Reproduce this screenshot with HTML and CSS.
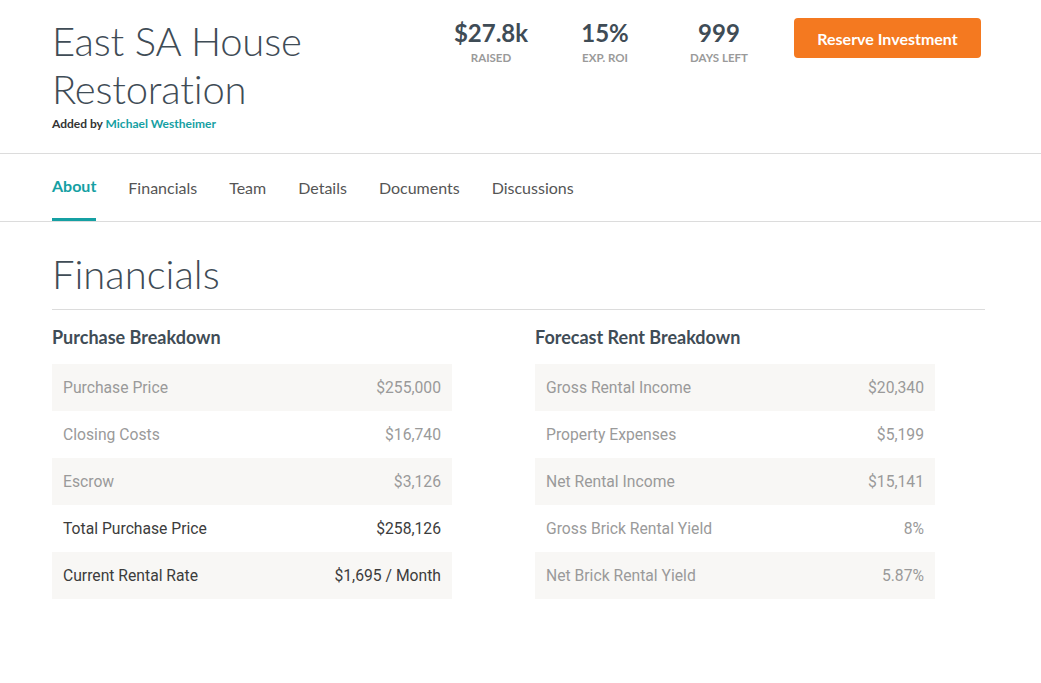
FILE: index.html
```html
<!DOCTYPE html>
<html lang="en">
<head>
<meta charset="utf-8">
<title>East SA House Restoration</title>
<link rel="stylesheet" href="styles.css">
</head>
<body>
<header class="top">
  <div class="wrap top-inner">
    <div class="title-block">
      <h1 class="title">East SA House<br>Restoration</h1>
      <p class="added">Added by <a class="author" href="#">Michael Westheimer</a></p>
    </div>
    <div class="top-right">
      <div class="stats">
        <div class="stat"><div class="stat-num">$27.8k</div><div class="stat-label">RAISED</div></div>
        <div class="stat"><div class="stat-num">15%</div><div class="stat-label">EXP. ROI</div></div>
        <div class="stat"><div class="stat-num">999</div><div class="stat-label">DAYS LEFT</div></div>
      </div>
      <a class="btn" href="#">Reserve Investment</a>
    </div>
  </div>
</header>
<nav class="tabs">
  <div class="wrap tabs-inner">
    <a class="tab active" href="#">About</a>
    <a class="tab" href="#">Financials</a>
    <a class="tab" href="#">Team</a>
    <a class="tab" href="#">Details</a>
    <a class="tab" href="#">Documents</a>
    <a class="tab" href="#">Discussions</a>
  </div>
</nav>
<main class="wrap">
  <h2 class="section-title">Financials</h2>
  <div class="cols">
    <section>
      <h3 class="sub">Purchase Breakdown</h3>
      <table class="fin">
        <tr><td>Purchase Price</td><td>$255,000</td></tr>
        <tr><td>Closing Costs</td><td>$16,740</td></tr>
        <tr><td>Escrow</td><td>$3,126</td></tr>
        <tr class="dark"><td>Total Purchase Price</td><td>$258,126</td></tr>
        <tr class="dark"><td>Current Rental Rate</td><td>$1,695 / Month</td></tr>
      </table>
    </section>
    <section>
      <h3 class="sub">Forecast Rent Breakdown</h3>
      <table class="fin">
        <tr><td>Gross Rental Income</td><td>$20,340</td></tr>
        <tr><td>Property Expenses</td><td>$5,199</td></tr>
        <tr><td>Net Rental Income</td><td>$15,141</td></tr>
        <tr><td>Gross Brick Rental Yield</td><td>8%</td></tr>
        <tr><td>Net Brick Rental Yield</td><td>5.87%</td></tr>
      </table>
    </section>
  </div>
</main>
</body>
</html>
```
FILE: styles.css
```css
* { box-sizing: border-box; }
html, body { margin: 0; padding: 0; background: #fff; }
body { font-family: Lato, "Open Sans", Arial, sans-serif; color: #3f4c56; }
a { text-decoration: none; }

.wrap { width: 933px; margin-left: 52px; }

.top { border-bottom: 1px solid #dcdcdc; }
.top-inner { display: flex; justify-content: space-between; align-items: flex-start; padding: 17px 4px 22px 0; }
.title { margin: 0; font-weight: 300; font-size: 40px; line-height: 48px; letter-spacing: -0.2px; color: #3f4c56; }
.added { margin: 4px 0 0; font-size: 12px; line-height: 14px; font-weight: 700; color: #333; }
.author { color: #15a0a3; }

.top-right { display: flex; align-items: flex-start; gap: 18px; padding-top: 1px; }
.stats { display: flex; }
.stat { width: 114px; text-align: center; }
.stat-num { font-size: 24px; font-weight: 700; line-height: 30px; color: #3f4c56; }
.stat-label { font-size: 11.5px; font-weight: 700; line-height: 14px; color: #9a9a9a; margin-top: 3px; }
.btn { display: flex; align-items: center; justify-content: center; width: 187px; height: 40px; background: #f47920; color: #fff; border-radius: 4px; font-size: 16px; font-weight: 700; }

.tabs { border-bottom: 1px solid #dcdcdc; }
.tabs-inner { display: flex; gap: 32px; }
.tab { display: block; padding: 24px 0 20px; line-height: 20px; font-size: 16px; color: #555; border-bottom: 3px solid transparent; }
.tab.active { color: #15a0a3; font-weight: 700; padding-top: 22px; padding-bottom: 22px; border-bottom-color: #15a0a3; }

.section-title { margin: 28px 0 0; padding-bottom: 11px; font-weight: 300; font-size: 40px; line-height: 48px; color: #3f4c56; border-bottom: 1px solid #dcdcdc; }
.cols { display: grid; grid-template-columns: 450px 450px; gap: 33px; }
.sub { margin: 15px 0 15px; font-size: 18px; line-height: 24px; font-weight: 700; color: #3f4c56; }
.fin { width: 400px; border-collapse: collapse; font-family: Roboto, Arial, sans-serif; font-size: 15.7px; color: #9a9a9a; }
.fin td { height: 47px; padding: 0 11px; }
.fin td:last-child { text-align: right; }
.fin tr:nth-child(odd) { background: #f8f7f5; }
.fin tr.dark { color: #3c3c3c; }
```
